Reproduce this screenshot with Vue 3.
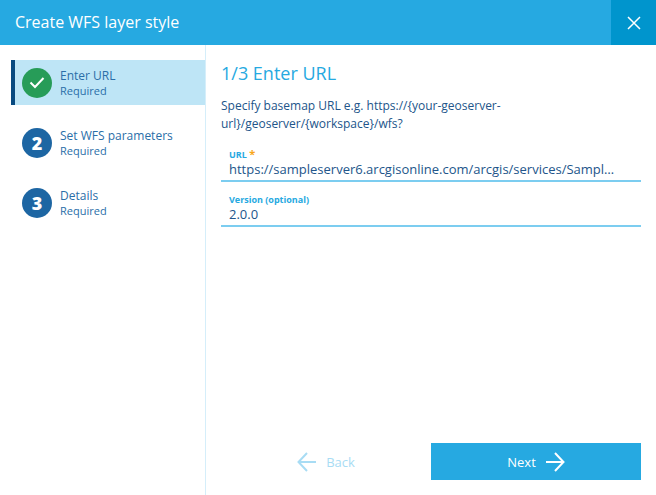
<template>
  <div class="dialog">
    <header class="dialog-header">
      <h1>Create WFS layer style</h1>
      <button class="close-btn" type="button" aria-label="Close">
        <svg width="14" height="14" viewBox="0 0 14 14">
          <path d="M1 1L13 13M13 1L1 13" />
        </svg>
      </button>
    </header>

    <div class="dialog-body">
      <nav class="steps">
        <button
          v-for="(step, index) in steps"
          :key="step.title"
          class="step"
          :class="{ active: index === current }"
          type="button"
          @click="current = index"
        >
          <span class="step-badge" :class="{ done: step.done }">
            <svg v-if="step.done" width="16" height="14" viewBox="0 0 16 14">
              <path d="M1.5 6.5L6 11L14.5 2" />
            </svg>
            <template v-else>{{ index + 1 }}</template>
          </span>
          <span class="step-text">
            <span class="step-title">{{ step.title }}</span>
            <span class="step-note">Required</span>
          </span>
        </button>
      </nav>

      <form class="content" @submit.prevent="next">
        <h2>{{ current + 1 }}/{{ steps.length }} {{ steps[current].title }}</h2>
        <p>Specify basemap URL e.g. https://{your-geoserver-url}/geoserver/{workspace}/wfs?</p>

        <div class="field">
          <label for="url">URL <span class="star">*</span></label>
          <input id="url" v-model="url" type="text" required />
        </div>
        <div class="field">
          <label for="version">Version (optional)</label>
          <input id="version" v-model="version" type="text" />
        </div>

        <div class="actions">
          <button class="btn btn-back" type="button" :disabled="current === 0" @click="current--">
            <svg width="20" height="20" viewBox="0 0 20 20">
              <path d="M19 10H2M10 1L1.5 10L10 19" />
            </svg>
            <span>Back</span>
          </button>
          <button class="btn btn-next" type="submit">
            <span>Next</span>
            <svg width="20" height="20" viewBox="0 0 20 20">
              <path d="M1 10H18M10 1L18.5 10L10 19" />
            </svg>
          </button>
        </div>
      </form>
    </div>
  </div>
</template>

<script setup>
import { ref } from 'vue'

const steps = ref([
  { title: 'Enter URL', done: true },
  { title: 'Set WFS parameters', done: false },
  { title: 'Details', done: false }
])
const current = ref(0)

const url = ref('https://sampleserver6.arcgisonline.com/arcgis/services/SampleWorldCities/MapServer/WFSServer')
const version = ref('2.0.0')

const next = () => {
  if (current.value < steps.value.length - 1) {
    current.value++
  }
}
</script>

<style>
body {
  margin: 0;
  background: #fff;
}
</style>

<style scoped>
.dialog {
  display: flex;
  flex-direction: column;
  min-height: 100vh;
  font-family: "Open Sans", "Noto Sans", sans-serif;
  color: #22558a;
}

.dialog * {
  box-sizing: border-box;
}

button,
input {
  font-family: inherit;
  border: 0;
  border-radius: 0;
  padding: 0;
  background: none;
}

svg {
  fill: none;
  stroke: currentColor;
  stroke-width: 2;
}

.dialog-header {
  display: flex;
  height: 45px;
  background: #26a9e1;
  color: #fff;
}

.dialog-header h1 {
  flex: 1;
  margin: 0;
  padding-left: 15px;
  font-size: 16px;
  font-weight: 500;
  line-height: 45px;
}

.close-btn {
  display: flex;
  align-items: center;
  justify-content: center;
  width: 45px;
  background: #0095cd;
  color: #fff;
}

.close-btn svg {
  stroke-width: 1.5;
}

.dialog-body {
  display: flex;
  flex: 1;
}

.steps {
  display: flex;
  flex-direction: column;
  gap: 15px;
  width: 206px;
  padding: 15px 0 15px 11px;
  border-right: 1px solid #d5eefa;
}

.step {
  display: flex;
  align-items: center;
  gap: 8px;
  height: 45px;
  padding-left: 7px;
  border-left: 4px solid transparent;
  color: #2a6ea8;
  text-align: left;
}

.step.active {
  background: #bee5f6;
  border-left-color: #084a80;
}

.step-badge {
  display: flex;
  align-items: center;
  justify-content: center;
  width: 30px;
  height: 30px;
  border-radius: 50%;
  background: #1d66a3;
  color: #fff;
  font-family: "Noto Sans", "Open Sans", sans-serif;
  font-size: 18px;
  font-weight: 900;
}

.step-badge.done {
  background: #279c58;
}

.step-text {
  display: flex;
  flex-direction: column;
}

.step-title {
  font-size: 12px;
  line-height: 16px;
}

.step-note {
  font-size: 11px;
  line-height: 14px;
}

.content {
  display: flex;
  flex: 1;
  flex-direction: column;
  min-width: 0;
  padding: 15px;
}

.content h2 {
  margin: 0 0 11px;
  color: #26a9e1;
  font-size: 18px;
  font-weight: 400;
  line-height: 26px;
}

.content p {
  margin: 0 0 4px;
  font-size: 12px;
  line-height: 18px;
}

.field {
  display: flex;
  flex-direction: column;
  height: 45px;
  padding: 12px 24px 0 8px;
  border-bottom: 2px solid #7ccdf0;
}

.field label {
  height: 11px;
  color: #26a9e1;
  font-size: 9px;
  font-weight: 700;
  line-height: 11px;
}

.star {
  color: #f9a61a;
  font-size: 11px;
  line-height: 9px;
}

.field input {
  width: 100%;
  height: 18px;
  color: #22558a;
  font-size: 13px;
  line-height: 18px;
  text-overflow: ellipsis;
  outline: none;
}

.actions {
  display: flex;
  margin-top: auto;
}

.btn {
  display: flex;
  flex: 1;
  align-items: center;
  justify-content: center;
  gap: 9px;
  height: 37px;
  font-size: 13px;
}

.btn-back {
  color: #26a9e1;
}

.btn-back:disabled {
  color: #a8dcf4;
}

.btn-next {
  background: #26a9e1;
  color: #fff;
  font-weight: 500;
}
</style>
